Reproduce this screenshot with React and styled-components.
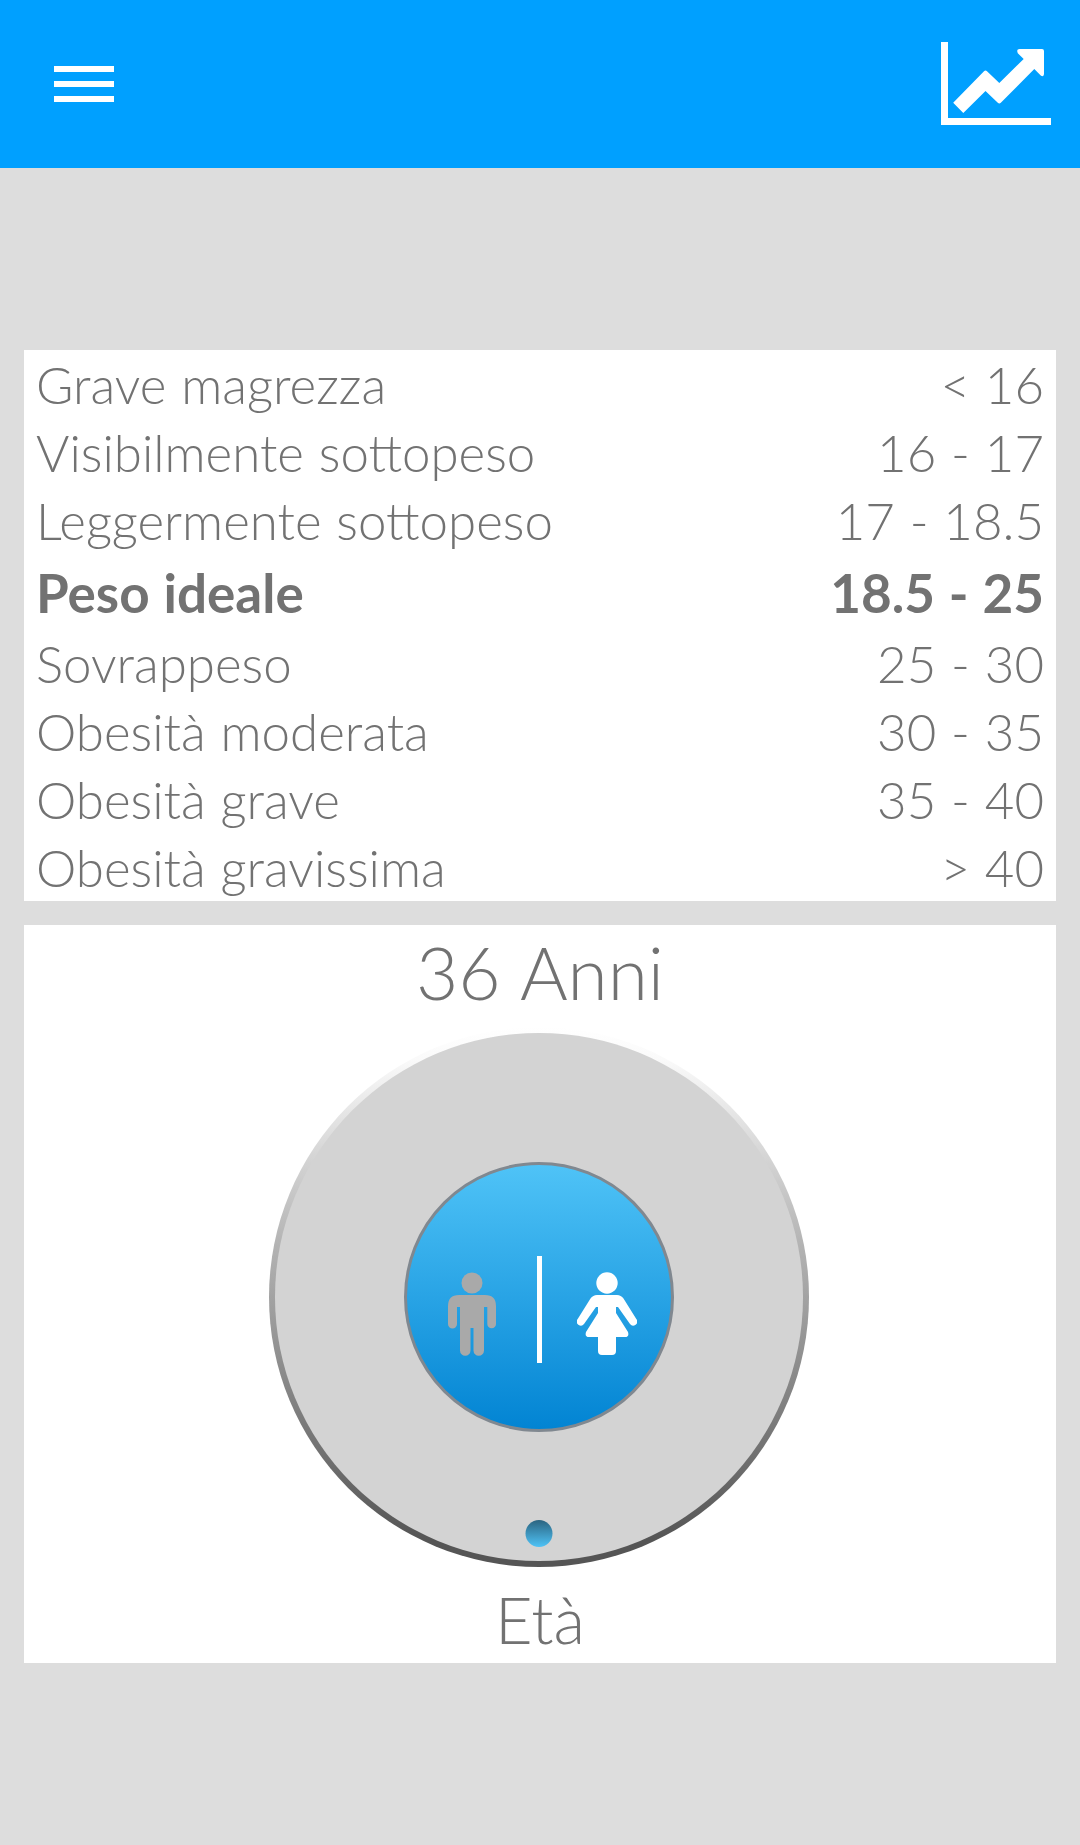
import { createGlobalStyle, styled, css } from 'styled-components';

const ranges = [
    { label: 'Grave magrezza', value: '< 16' },
    { label: 'Visibilmente sottopeso', value: '16 - 17' },
    { label: 'Leggermente sottopeso', value: '17 - 18.5' },
    { label: 'Peso ideale', value: '18.5 - 25', active: true },
    { label: 'Sovrappeso', value: '25 - 30' },
    { label: 'Obesità moderata', value: '30 - 35' },
    { label: 'Obesità grave', value: '35 - 40' },
    { label: 'Obesità gravissima', value: '> 40' },
];

const ChartIcon = () => (
    <svg width="110" height="83" viewBox="0 0 110 83" fill="#fff">
        <path d="M0 0H7V76H110V83H0Z" />
        <path d="M12.2 60.8L43 29.3Q44.5 27.7 46 29.3L58.3 41L82.7 17L76.8 11.2Q75 7 78.5 7H101Q103 7 103 9V32Q103 35 100 33.8L93.3 27L59.8 60.8Q58.3 62.2 56.8 60.8L44.5 49L22.3 71Z" />
    </svg>
);

const MaleIcon = () => (
    <svg width="48" height="84" viewBox="0 0 48 84" fill="#a9a9a9">
        <circle cx="24" cy="11" r="10.5" />
        <path d="M11 23H37Q48 23 48 34V52A4.3 4.3 0 0 1 39.3 52V35H36V78.5A4.9 4.9 0 0 1 25.5 78.5V56H22.5V78.5A4.9 4.9 0 0 1 12 78.5V35H9V52A4.3 4.3 0 0 1 0 52V34Q0 23 11 23Z" />
    </svg>
);

const FemaleIcon = () => (
    <svg width="60" height="84" viewBox="0 0 60 84" fill="#fff">
        <circle cx="30" cy="11" r="10.7" />
        <path d="M20 23H40Q44 23 46.5 26.5L59.3 47A4 4 0 0 1 53 52L41 35H39V41L51 60Q52.5 65 48 65H39V79Q39 83 35 83H25Q21 83 21 79V65H12Q7.5 65 9 60L21 41V35H19L7 52A4 4 0 0 1 .7 47L13.5 26.5Q16 23 20 23Z" />
    </svg>
);

const App = () => {
    return (
        <>
            <GlobalStyle />
            <Page>
                <Header>
                    <MenuButton aria-label="Menu">
                        <MenuLine />
                        <MenuLine />
                        <MenuLine />
                    </MenuButton>
                    <ChartButton aria-label="Grafico">
                        <ChartIcon />
                    </ChartButton>
                </Header>
                <Main>
                    <RangeCard>
                        {ranges.map((range) => (
                            <RangeRow key={range.label} $active={range.active}>
                                <span>{range.label}</span>
                                <span>{range.value}</span>
                            </RangeRow>
                        ))}
                    </RangeCard>
                    <DialCard>
                        <DialValue>36 Anni</DialValue>
                        <Dial>
                            <DialFace>
                                <GenderSwitch>
                                    <MaleIcon />
                                    <Divider />
                                    <FemaleIcon />
                                </GenderSwitch>
                                <Knob />
                            </DialFace>
                        </Dial>
                        <DialLabel>Età</DialLabel>
                    </DialCard>
                </Main>
            </Page>
        </>
    );
};

export default App;

const GlobalStyle = createGlobalStyle`
    * {
        box-sizing: border-box;
    }
    body {
        margin: 0;
        background: #ddd;
        color: #727272;
        font-family: Lato, sans-serif;
        font-weight: 300;
        word-spacing: 1px;
    }
    button {
        padding: 0;
        border: 0;
        background: none;
    }
    svg {
        display: block;
    }
`;

const Page = styled.div`
    display: flex;
    flex-direction: column;
    width: 1080px;
    height: 1845px;
    overflow: hidden;
`;

const Header = styled.header`
    display: flex;
    align-items: center;
    justify-content: space-between;
    flex: 0 0 auto;
    height: 168px;
    padding: 0 29px 0 54px;
    background: #00a0ff;
`;

const MenuButton = styled.button`
    display: flex;
    flex-direction: column;
    gap: 9px;
    width: 60px;
`;

const MenuLine = styled.span`
    height: 6px;
    background: #fff;
`;

const ChartButton = styled.button`
    width: 110px;
    margin-bottom: 1px;
`;

const Main = styled.main`
    display: flex;
    flex-direction: column;
    gap: 24px;
    padding: 182px 24px 0;
`;

const RangeCard = styled.section`
    height: 551px;
    padding: 0 12px;
    background: #fff;
`;

const RangeRow = styled.div`
    display: flex;
    justify-content: space-between;
    height: 68px;
    font-size: 51px;
    line-height: 69px;
    white-space: nowrap;
    ${(props) =>
        props.$active &&
        css`
            height: 75px;
            font-size: 53px;
            font-weight: 700;
            line-height: 78px;
        `}
`;

const DialCard = styled.section`
    display: flex;
    flex-direction: column;
    align-items: center;
    height: 738px;
    background: #fff;
`;

const DialValue = styled.div`
    height: 102px;
    font-size: 73px;
    line-height: 95px;
    word-spacing: 2px;
`;

const Dial = styled.div`
    display: flex;
    flex: 0 0 auto;
    align-items: center;
    justify-content: center;
    width: 540px;
    height: 540px;
    margin-right: 2px;
    border-radius: 50%;
    background: linear-gradient(#fff 0%, #fafafa 6%, #b4b4b4 40%, #555 95%);
`;

const DialFace = styled.div`
    position: relative;
    display: flex;
    align-items: center;
    justify-content: center;
    width: 528px;
    height: 528px;
    border-radius: 50%;
    background: #d3d3d3;
`;

const GenderSwitch = styled.div`
    display: flex;
    align-items: center;
    justify-content: center;
    width: 270px;
    height: 270px;
    padding: 24px 0 0 7px;
    border: 3px solid #808890;
    border-radius: 50%;
    background: linear-gradient(#4fc3f7, #0284d3);

    svg {
        margin-top: 9px;
    }
`;

const Divider = styled.span`
    width: 5px;
    height: 107px;
    margin: 0 35px 0 41px;
    background: #fff;
`;

const Knob = styled.span`
    position: absolute;
    bottom: 14px;
    left: 50%;
    width: 27px;
    height: 27px;
    border-radius: 50%;
    background: linear-gradient(#2b6480, #4fc3f7);
    transform: translateX(-50%);
`;

const DialLabel = styled.div`
    height: 96px;
    font-size: 65px;
    line-height: 105px;
`;
